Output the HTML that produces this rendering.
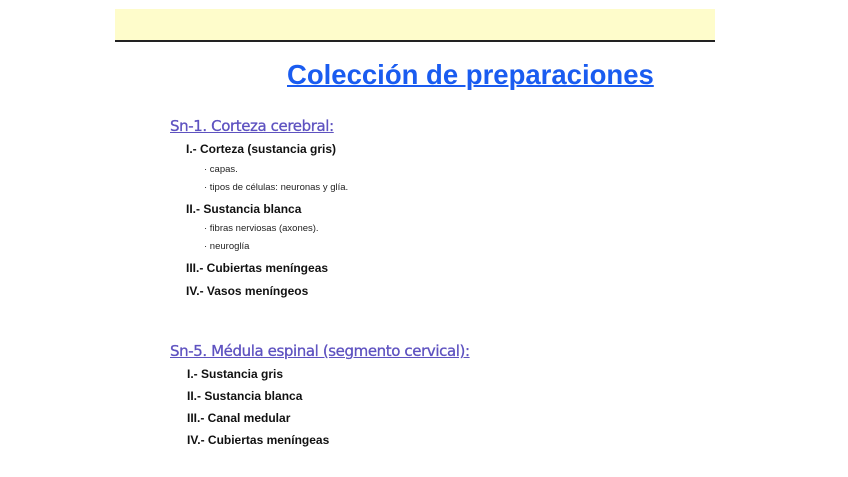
<!DOCTYPE html>
<html><head><meta charset="utf-8"><style>
body{margin:0;width:848px;height:477px;background:#fff;position:relative;overflow:hidden;font-family:"Liberation Sans",sans-serif}
.a{position:absolute;white-space:nowrap}
.band{left:115px;top:9px;width:600px;height:31px;background:#fefccb;border-bottom:2px solid #222}
.t{left:287px;top:59px;font-size:27.5px;font-weight:bold;color:#1a5cf0;text-decoration:underline;text-decoration-thickness:2px}
.h{font-family:"DejaVu Sans",sans-serif;font-size:15px;color:#5e52c0;text-decoration:underline;letter-spacing:-0.4px;-webkit-text-stroke:0.3px #5e52c0}
.b{font-size:12px;font-weight:bold;color:#111}
.s{font-size:9.5px;color:#222}
</style></head><body>
<div class="a band"></div>
<div class="a t">Colección de preparaciones</div>
<div class="a h" style="left:170px;top:117px">Sn-1. Corteza cerebral:</div>
<div class="a b" style="left:186px;top:142px">I.- Corteza (sustancia gris)</div>
<div class="a s" style="left:204px;top:164px">· capas.</div>
<div class="a s" style="left:204px;top:182px">· tipos de células: neuronas y glía.</div>
<div class="a b" style="left:186px;top:202px">II.- Sustancia blanca</div>
<div class="a s" style="left:204px;top:223px">· fibras nerviosas (axones).</div>
<div class="a s" style="left:204px;top:241px">· neuroglía</div>
<div class="a b" style="left:186px;top:261px">III.- Cubiertas meníngeas</div>
<div class="a b" style="left:186px;top:284px">IV.- Vasos meníngeos</div>
<div class="a h" style="left:170px;top:342px">Sn-5. Médula espinal (segmento cervical):</div>
<div class="a b" style="left:187px;top:367px">I.- Sustancia gris</div>
<div class="a b" style="left:187px;top:389px">II.- Sustancia blanca</div>
<div class="a b" style="left:187px;top:411px">III.- Canal medular</div>
<div class="a b" style="left:187px;top:433px">IV.- Cubiertas meníngeas</div>
</body></html>
